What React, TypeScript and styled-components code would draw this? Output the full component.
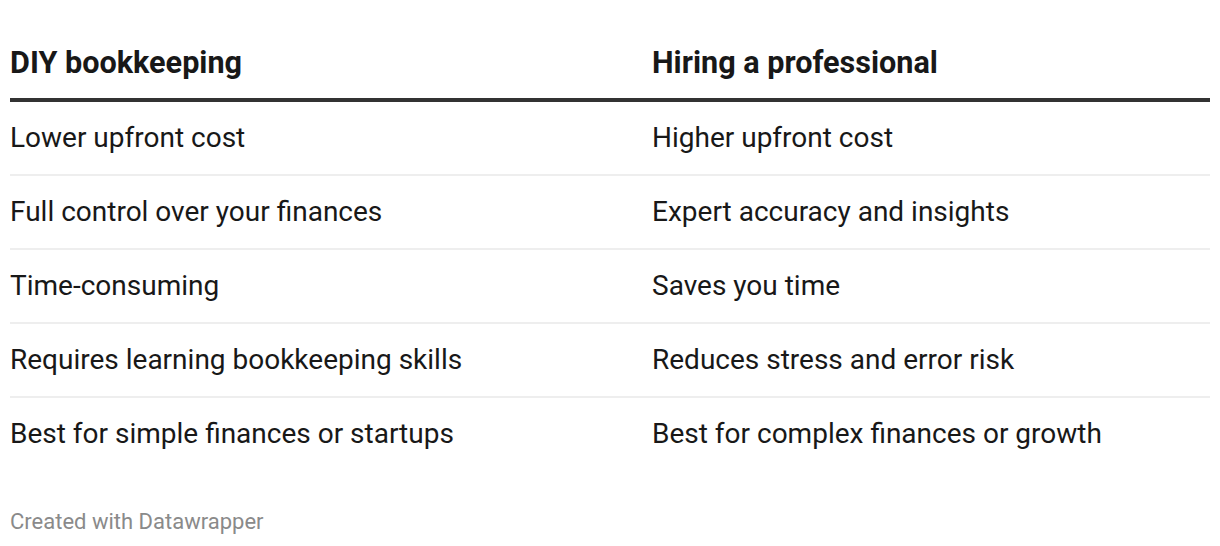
import React from "react";
import styled, { createGlobalStyle } from "styled-components";

const GlobalStyle = createGlobalStyle`
  body {
    margin: 0;
    background: #ffffff;
    font-family: Roboto, "Liberation Sans", Arial, sans-serif;
    color: #181818;
  }
`;

const Wrapper = styled.div`
  padding: 0 10px;
`;

const Table = styled.div`
  display: flex;
  flex-direction: column;
`;

const Row = styled.div<{ $head?: boolean; $last?: boolean }>`
  display: grid;
  grid-template-columns: 642px 1fr;
  align-items: ${(p) => (p.$head ? "end" : "center")};
  height: ${(p) => (p.$head ? "82px" : "72px")};
  padding-bottom: ${(p) => (p.$head ? "16px" : "0")};
  border-bottom: ${(p) =>
    p.$head ? "4px solid #333333" : p.$last ? "none" : "2px solid #eeeeee"};
`;

const Cell = styled.div<{ $head?: boolean }>`
  font-size: ${(p) => (p.$head ? "30.6px" : "28px")};
  line-height: 1.2;
  font-weight: ${(p) => (p.$head ? 700 : 400)};
  color: #181818;
  white-space: nowrap;
`;

const Footer = styled.div`
  margin-top: 39px;
  font-size: 22px;
  line-height: 26px;
  color: #8a8a8a;
`;

const rows: [string, string][] = [
  ["Lower upfront cost", "Higher upfront cost"],
  ["Full control over your finances", "Expert accuracy and insights"],
  ["Time-consuming", "Saves you time"],
  ["Requires learning bookkeeping skills", "Reduces stress and error risk"],
  ["Best for simple finances or startups", "Best for complex finances or growth"],
];

export default function App() {
  return (
    <>
      <GlobalStyle />
      <Wrapper>
        <Table>
          <Row $head>
            <Cell $head>DIY bookkeeping</Cell>
            <Cell $head>Hiring a professional</Cell>
          </Row>
          {rows.map(([a, b], i) => (
            <Row key={a} $last={i === rows.length - 1}>
              <Cell>{a}</Cell>
              <Cell>{b}</Cell>
            </Row>
          ))}
        </Table>
        <Footer>Created with Datawrapper</Footer>
      </Wrapper>
    </>
  );
}
